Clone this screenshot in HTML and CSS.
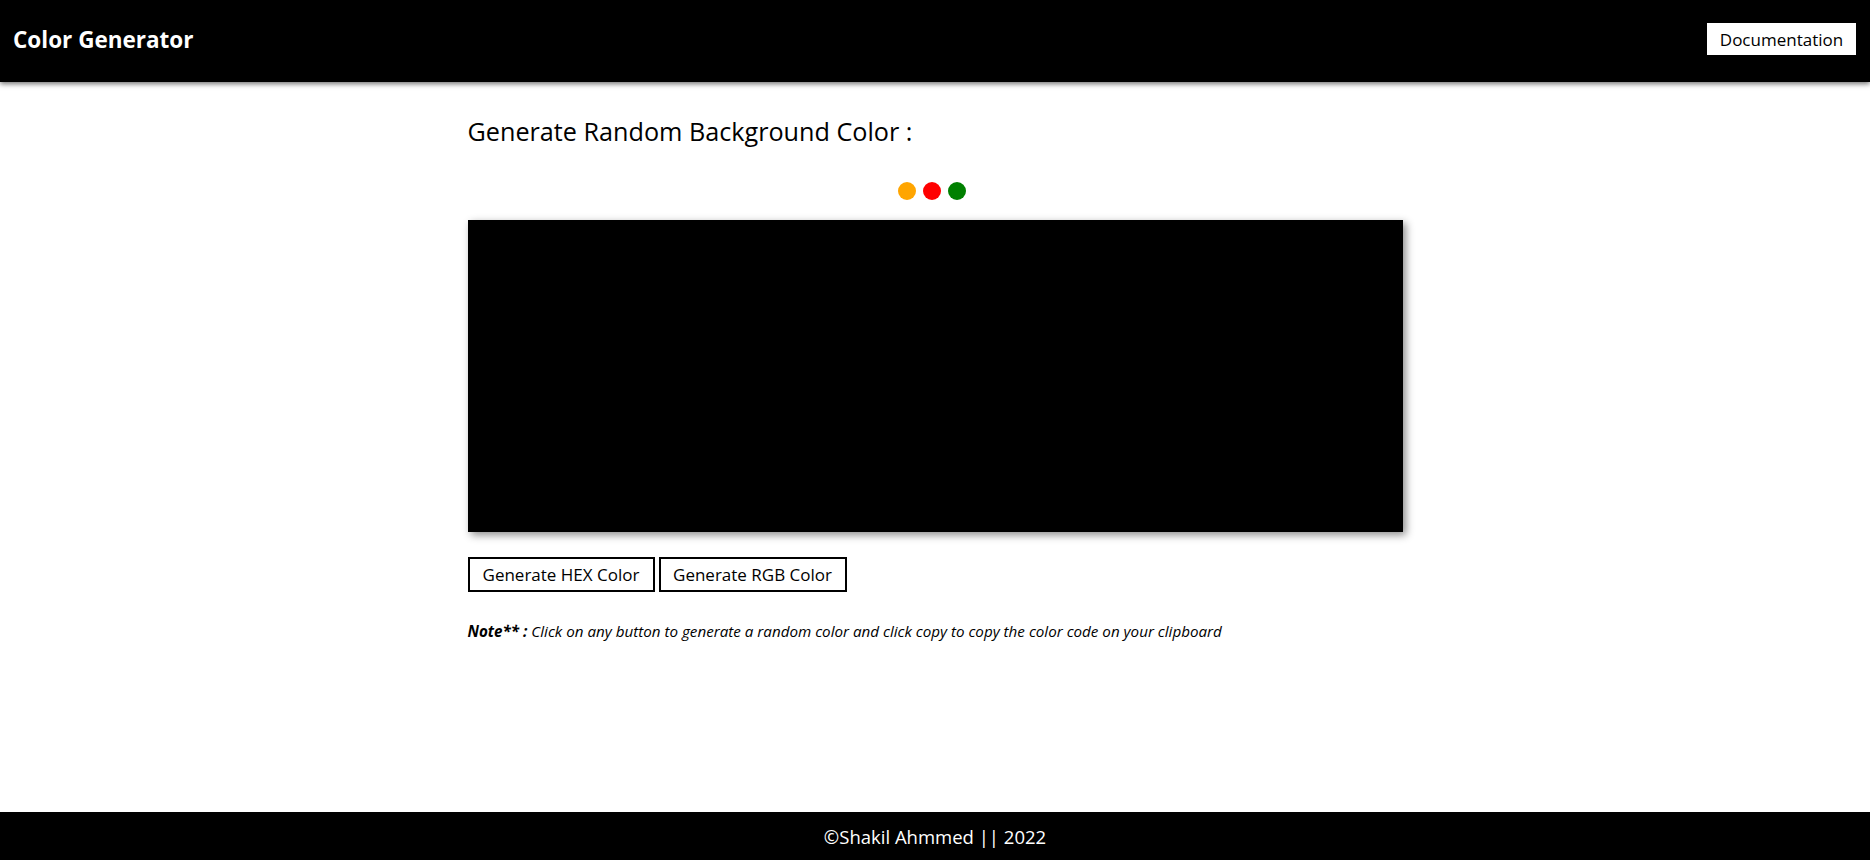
FILE: index.html
```html
<!DOCTYPE html>
<html lang="en">
<head>
<meta charset="UTF-8">
<title>Color Generator</title>
<link rel="stylesheet" href="styles.css">
</head>
<body>
<header class="topbar">
  <h1 class="brand">Color Generator</h1>
  <a class="doc-btn" href="#">Documentation</a>
</header>
<main class="content">
  <h2 class="title">Generate Random Background Color :</h2>
  <div class="dots">
    <span class="dot dot-orange"></span>
    <span class="dot dot-red"></span>
    <span class="dot dot-green"></span>
  </div>
  <div class="preview"></div>
  <div class="actions">
    <button class="btn">Generate HEX Color</button>
    <button class="btn">Generate RGB Color</button>
  </div>
  <p class="note"><strong>Note** :</strong> Click on any button to generate a random color and click copy to copy the color code on your clipboard</p>
</main>
<footer class="footer">©Shakil Ahmmed || 2022</footer>
</body>
</html>
```
FILE: styles.css
```css
* { box-sizing: border-box; }
html, body { margin: 0; padding: 0; }
body {
  font-family: "Open Sans", "Noto Sans", sans-serif;
  color: #000;
  background: #fff;
  min-height: 100vh;
  display: flex;
  flex-direction: column;
}
.topbar {
  height: 82px;
  background: #000;
  display: flex;
  align-items: center;
  justify-content: space-between;
  padding: 0 14px 0 13px;
  box-shadow: 0 2px 5px rgba(0,0,0,0.55);
  position: relative;
  z-index: 1;
}
.brand {
  margin: 0 0 4px;
  color: #fff;
  font-size: 22.5px;
  font-weight: 700;
}
.doc-btn {
  background: #fff;
  color: #000;
  text-decoration: none;
  width: 149px;
  height: 32px;
  display: flex;
  align-items: center;
  justify-content: center;
  font-size: 17px;
  margin-bottom: 4px;
}
.content {
  flex: 1;
  width: 935px;
  margin: 0 auto;
}
.title {
  margin: 34px 0 0;
  font-size: 25.2px;
  font-weight: 400;
  line-height: 30px;
}
.dots {
  display: flex;
  justify-content: center;
  gap: 7px;
  margin: 36px 0 0 -6px;
}
.dot {
  width: 18px;
  height: 18px;
  border-radius: 50%;
}
.dot-orange { background: orange; }
.dot-red { background: red; }
.dot-green { background: green; }
.preview {
  margin-top: 20px;
  height: 312px;
  background: #000;
  box-shadow: 3px 3px 8px rgba(0,0,0,0.45);
}
.actions {
  margin-top: 25px;
  display: flex;
  gap: 4px;
}
.btn {
  font-family: inherit;
  font-size: 17px;
  background: #fff;
  color: #000;
  border: 2px solid #000;
  height: 35px;
  width: 187px;
  padding: 0;
  border-radius: 0;
}
.btn + .btn { width: 188px; }
.note {
  margin: 29px 0 0;
  font-size: 15.2px;
  font-style: italic;
}
.footer {
  height: 48px;
  background: #000;
  color: #fff;
  display: flex;
  align-items: center;
  justify-content: center;
  font-size: 18.5px;
}
```
